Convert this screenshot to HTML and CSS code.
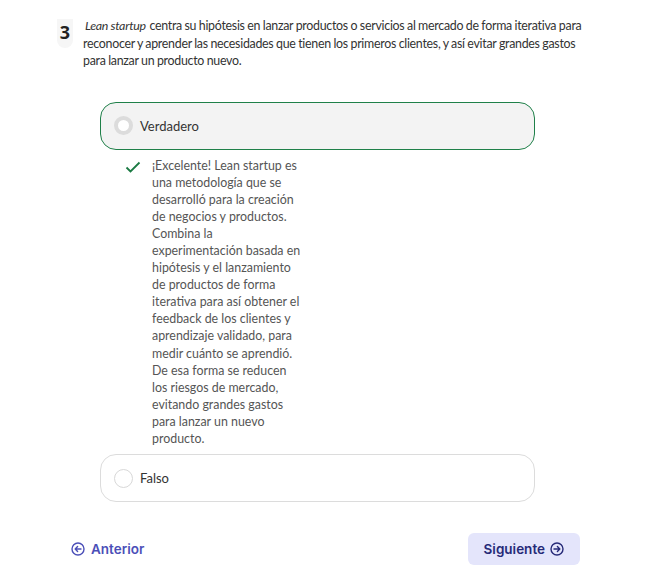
FILE: index.html
```html
<!DOCTYPE html>
<html lang="es">
<head>
<meta charset="utf-8">
<link rel="stylesheet" href="styles.css">
</head>
<body>
<div class="page">
  <div class="question">
    <div class="num">3</div>
    <p class="qtext"><em>Lean startup</em> centra su hipótesis en lanzar productos o servicios al mercado de forma iterativa para reconocer y aprender las necesidades que tienen los primeros clientes, y así evitar grandes gastos para lanzar un producto nuevo.</p>
  </div>

  <div class="options">
    <div class="option selected">
      <span class="radio radio-on"></span>
      <span class="label">Verdadero</span>
    </div>
    <div class="feedback">
      <svg class="check" width="16" height="12" viewBox="0 0 16 12"><path d="M1.5 6.5 L5.5 10.5 L14.5 1.5" fill="none" stroke="#1b7a43" stroke-width="1.8"/></svg>
      <p class="ftext">¡Excelente! Lean startup es una metodología que se desarrolló para la creación de negocios y productos. Combina la experimentación basada en hipótesis y el lanzamiento de productos de forma iterativa para así obtener el feedback de los clientes y aprendizaje validado, para medir cuánto se aprendió. De esa forma se reducen los riesgos de mercado, evitando grandes gastos para lanzar un nuevo producto.</p>
    </div>
    <div class="option">
      <span class="radio"></span>
      <span class="label">Falso</span>
    </div>
  </div>

  <div class="nav">
    <button class="btn prev">
      <svg width="14" height="14" viewBox="0 0 14 14"><circle cx="7" cy="7" r="6" fill="none" stroke="currentColor" stroke-width="1.4"/><path d="M10 7 H4.3 M6.6 4.6 L4.2 7 L6.6 9.4" fill="none" stroke="currentColor" stroke-width="1.4" stroke-linecap="round" stroke-linejoin="round"/></svg>
      <span>Anterior</span>
    </button>
    <button class="btn next">
      <span>Siguiente</span>
      <svg width="14" height="14" viewBox="0 0 14 14"><circle cx="7" cy="7" r="6" fill="none" stroke="currentColor" stroke-width="1.4"/><path d="M4 7 H9.7 M7.4 4.6 L9.8 7 L7.4 9.4" fill="none" stroke="currentColor" stroke-width="1.4" stroke-linecap="round" stroke-linejoin="round"/></svg>
    </button>
  </div>
</div>
</body>
</html>
```
FILE: styles.css
```css
* { box-sizing: border-box; }
body {
  margin: 0;
  background: #fff;
  font-family: "Lato", "Liberation Sans", sans-serif;
  color: #333;
}
.page {
  width: 669px;
  padding: 19px 0 0 57px;
}
.question {
  display: flex;
  align-items: flex-start;
  gap: 10px;
}
.num {
  flex: none;
  width: 16px;
  height: 29px;
  background: #f6f6f6;
  border-radius: 0 0 8px 8px;
  font-family: "Open Sans", sans-serif;
  font-weight: 700;
  font-size: 18px;
  color: #222;
  display: flex;
  justify-content: center;
  padding-top: 2px;
  line-height: 22px;
}
.qtext {
  margin: -2px 0 0 0;
  width: 512px;
  font-size: 12.4px;
  letter-spacing: -0.28px;
  word-spacing: -0.3px;
  line-height: 17.5px;
  color: #333;
}
.qtext em { font-style: italic; padding-left: 2px; padding-right: 1px; }
.options {
  margin: 32px 0 0 43px;
  width: 435px;
}
.option {
  height: 48px;
  border: 1px solid #dcdcdc;
  border-radius: 16px;
  display: flex;
  align-items: center;
  padding-left: 13px;
  gap: 7px;
  background: #fff;
}
.option.selected {
  background: #f3f3f3;
  border-color: #1f8049;
}
.radio {
  width: 19px;
  height: 19px;
  border-radius: 50%;
  border: 1px solid #d8d8d8;
  background: #fff;
}
.radio-on {
  border: 4px solid #dcdcdc;
}
.label {
  font-size: 13px;
  color: #333;
}
.feedback {
  display: flex;
  align-items: flex-start;
  padding: 7px 0 0 25px;
  margin-bottom: 7px;
}
.check { margin-top: 4px; flex: none; }
.ftext {
  margin: 0 0 0 11px;
  width: 152px;
  font-size: 12.4px;
  line-height: 17.1px;
  color: #555;
}
.nav {
  display: flex;
  justify-content: space-between;
  align-items: center;
  width: 509px;
  margin: 31px 0 0 14px;
}
.btn {
  border: 0;
  font-family: "Inter", "Open Sans", sans-serif;
  font-weight: 600;
  font-size: 13.5px;
  display: flex;
  align-items: center;
  gap: 6px;
  cursor: pointer;
}
.prev {
  background: none;
  color: #4b4fb8;
  padding: 0;
}
.next {
  background: #e4e5fb;
  color: #262a78;
  height: 32px;
  padding: 0 16px;
  border-radius: 6px;
  gap: 5px;
}
```
